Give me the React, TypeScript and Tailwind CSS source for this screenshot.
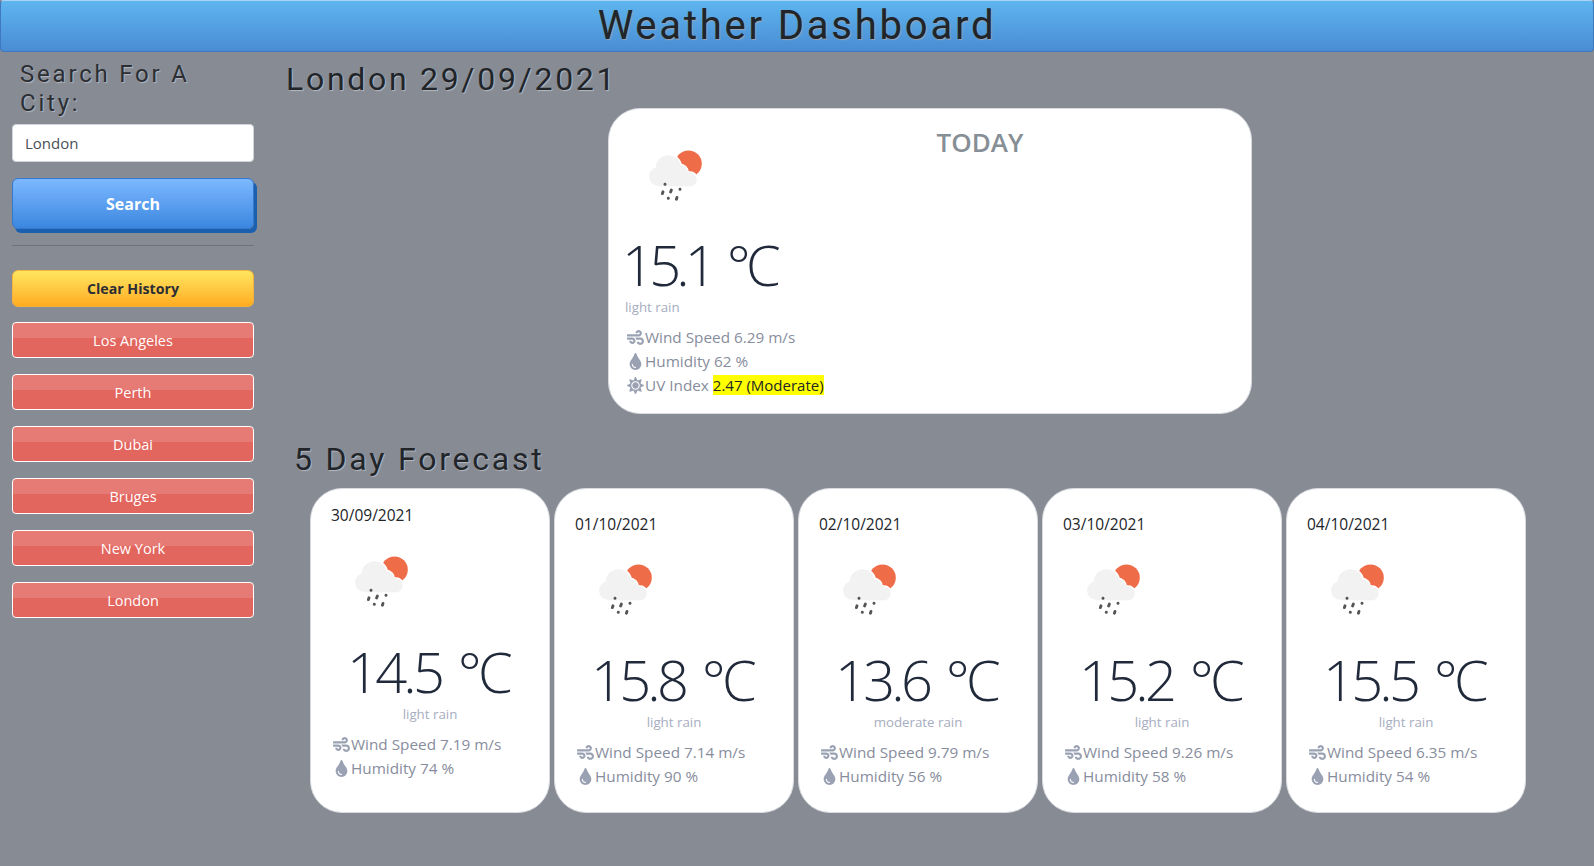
import { FaWind, FaTint, FaSun } from "react-icons/fa";

const body = "[font-family:'Open_Sans',sans-serif]";

function WeatherIcon() {
  return (
    <svg viewBox="0 0 100 100" className="w-[100px] h-[100px] shrink-0">
      <circle cx="63.5" cy="38.7" r="13.3" fill="#ef6c49" />
      <g fill="#ffffff" stroke="#ffffff" strokeWidth="3">
        <circle cx="43.3" cy="42.7" r="12.5" />
        <circle cx="55" cy="47.5" r="7.5" />
        <circle cx="33.5" cy="51.5" r="9.5" />
        <circle cx="65" cy="54.5" r="6.8" />
      </g>
      <g fill="#f2f2f2">
        <circle cx="43.3" cy="42.7" r="12.5" />
        <circle cx="55" cy="47.5" r="7.5" />
        <circle cx="33.5" cy="51.5" r="9.5" />
        <circle cx="65" cy="54.5" r="6.8" />
        <rect x="33.5" y="46" width="31.5" height="15.3" />
      </g>
      <g stroke="#555555" strokeWidth="2.9" strokeLinecap="round">
        <path d="M40 59.2 L40 59.4" />
        <path d="M38 66.8 L37.4 68.6" />
        <path d="M46.4 65 L45.6 67" />
        <path d="M55 64.2 L55 64.4" />
        <path d="M43.3 73.2 L43.3 73.4" />
        <path d="M52 72.4 L51.4 74.2" />
      </g>
    </svg>
  );
}

function Stat({ icon, children }: { icon: React.ReactNode; children: React.ReactNode }) {
  return (
    <div className="flex items-center h-6 text-[#878d9d] text-[15.3px]">
      <span className="w-[19px] flex justify-center shrink-0 text-[#99a1b3]">{icon}</span>
      <span>{children}</span>
    </div>
  );
}

const forecast = [
  { date: "30/09/2021", temp: "14.5 °C", desc: "light rain", wind: "7.19", hum: "74", first: true },
  { date: "01/10/2021", temp: "15.8 °C", desc: "light rain", wind: "7.14", hum: "90" },
  { date: "02/10/2021", temp: "13.6 °C", desc: "moderate rain", wind: "9.79", hum: "56" },
  { date: "03/10/2021", temp: "15.2 °C", desc: "light rain", wind: "9.26", hum: "58" },
  { date: "04/10/2021", temp: "15.5 °C", desc: "light rain", wind: "6.35", hum: "54" },
];

const cities = ["Los Angeles", "Perth", "Dubai", "Bruges", "New York", "London"];

export default function App() {
  return (
    <div className={`w-[1594px] h-[866px] overflow-hidden bg-[#878b94] ${body}`}>
      <header className="h-[52px] rounded-[4px] border border-[#3f78bd] border-t-[#a9d4f5] bg-gradient-to-b from-[#5eb5ef] to-[#4a8cd3] flex items-center justify-center">
        <h1 className="[font-family:Roboto,sans-serif] text-[40px] leading-none tracking-[2.8px] text-[#212529] [text-shadow:1px_1px_1px_#9aa5b5]">
          Weather Dashboard
        </h1>
      </header>

      <div className="flex">
        <aside className="w-[266px] shrink-0 px-3">
          <h2 className="[font-family:Roboto,sans-serif] text-[24px] leading-[28.8px] tracking-[2.8px] text-[#2b2e33] pl-2 pr-8 pt-[8px] [text-shadow:1px_1px_1px_#b5b8be]">
            Search For A City:
          </h2>
          <div className="mt-[6px] h-[38px] rounded-[4px] border border-[#ced4da] bg-white flex items-center px-3 pt-px text-[15px] text-[#495057]">
            London
          </div>
          <button className="mt-[16px] w-full h-[51px] rounded-[6px] border border-[#3579cf] bg-gradient-to-b from-[#7cb8ff] to-[#3a87e0] pt-px text-white font-bold text-base shadow-[3px_4px_0_#1b60ae]">
            Search
          </button>
          <div className="mt-[16px] h-px bg-[#6f737c]" />
          <button className="mt-[24px] w-full h-[37px] rounded-[6px] border border-[#f5b23c] bg-gradient-to-b from-[#ffe65e] to-[#ffac1e] pt-px text-[#2b2e33] font-bold text-[14.2px]">
            Clear History
          </button>
          <div className="mt-[15px] flex flex-col gap-4">
            {cities.map((c) => (
              <button
                key={c}
                className="w-full h-9 rounded-[4px] border border-white bg-[linear-gradient(to_bottom,#e67a74_0%,#e67a74_43%,#e2655e_43%,#e2655e_100%)] pt-[2px] text-white text-[14.5px]"
              >
                {c}
              </button>
            ))}
          </div>
        </aside>

        <main className="flex-1 min-w-0">
          <h2 className="[font-family:Roboto,sans-serif] text-[32px] leading-[38px] tracking-[2.7px] text-[#212529] pl-[20px] pt-[8px] [text-shadow:1px_1px_1px_#b5b8be]">
            London 29/09/2021
          </h2>
          <section className="mt-[10px] ml-[342px] w-[644px] h-[306px] rounded-[32px] border border-[#d8dae0] bg-white p-4">
            <div className="flex">
              <WeatherIcon />
              <div className="flex-1 text-center text-[#868e96] font-semibold text-[26px] leading-[34px]">TODAY</div>
            </div>
            <div className="-ml-[3px] mt-[9px] text-[56px] font-light leading-[60px] text-[#212a3b] tracking-[-4.8px] [word-spacing:5px]">
              15.1 °C
            </div>
            <div className="mt-[3px] text-[13.3px] leading-[21px] text-[#a6adc0]">light rain</div>
            <div className="mt-[7px] pl-px">
              <Stat icon={<FaWind size={17} />}>Wind Speed 6.29 m/s</Stat>
              <Stat icon={<FaTint size={17} />}>Humidity 62 %</Stat>
              <Stat icon={<FaSun size={17} />}>
                UV Index <mark className="bg-[#ffff00] text-[#212529] text-[15px]">2.47 (Moderate)</mark>
              </Stat>
            </div>
          </section>

          <h2 className="[font-family:Roboto,sans-serif] text-[32px] leading-[38px] tracking-[2.8px] text-[#212529] pl-[28px] mt-[26px] [text-shadow:1px_1px_1px_#b5b8be]">
            5 Day Forecast
          </h2>
          <div className="mt-[10px] ml-[44px] flex gap-1">
            {forecast.map((f) => (
              <article
                key={f.date}
                className={`w-[240px] h-[325px] rounded-[32px] border border-[#d8dae0] bg-white px-5 ${f.first ? "pt-[15px]" : "pt-[23px]"}`}
              >
                <div className={`text-[15.5px] leading-[22px] text-[#212529] ${f.first ? "" : "pt-px -mb-px"}`}>{f.date}</div>
                <div className="mt-[5px]">
                  <WeatherIcon />
                </div>
                <div className="text-center text-[56px] font-light leading-[60px] text-[#212a3b] tracking-[-3.8px] [word-spacing:6px] mt-[10px] pr-[4px]">
                  {f.temp}
                </div>
                <div className="mt-[3px] text-center text-[13.3px] leading-[21px] text-[#a6adc0]">{f.desc}</div>
                <div className="mt-[7px] pl-px">
                  <Stat icon={<FaWind size={17} />}>Wind Speed {f.wind} m/s</Stat>
                  <Stat icon={<FaTint size={17} />}>Humidity {f.hum} %</Stat>
                </div>
              </article>
            ))}
          </div>
        </main>
      </div>
    </div>
  );
}
